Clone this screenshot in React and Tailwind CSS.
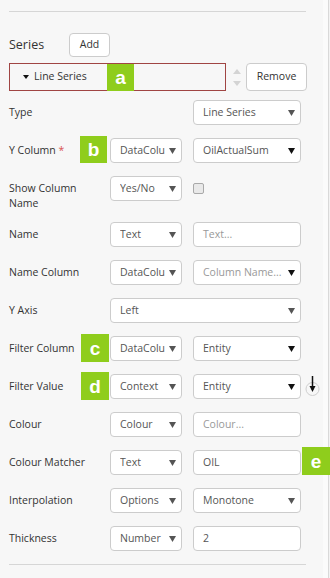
import React from 'react'

const font = { fontFamily: '"Open Sans", "Liberation Sans", sans-serif' }

const Arrow = ({ dark }) => (
  <svg width="7" height="6" viewBox="0 0 7 6" className="shrink-0">
    <polygon points="0,0 7,0 3.5,6" fill={dark ? '#111' : '#555'} />
  </svg>
)

const Select = ({ value, w, placeholder, dark }) => (
  <div className={`${w} shrink-0 h-[25px] bg-white border border-[#cccccc] rounded-[4px] flex items-center pl-[9px] pr-[5px] text-[10.5px]`}>
    <span className={`flex-1 overflow-hidden whitespace-nowrap mr-[4px] ${placeholder ? 'text-[#999]' : 'text-[#555]'}`}>{value}</span>
    <Arrow dark={dark} />
  </div>
)

const Input = ({ value, placeholder }) => (
  <div className="w-[108px] shrink-0 h-[25px] bg-white border border-[#cccccc] rounded-[4px] flex items-center pl-[9px] text-[10.5px]">
    <span className={placeholder ? 'text-[#999]' : 'text-[#555]'}>{value || placeholder}</span>
  </div>
)

const Badge = ({ letter, className = '' }) => (
  <div className={`relative shrink-0 w-[27px] h-[27px] bg-[#8fcd1c] text-white font-bold text-[19px] leading-none flex items-center justify-center ${className}`} style={{ fontFamily: '"Liberation Sans", Arial, sans-serif' }}>
    {letter}
  </div>
)

const Row = ({ label, badge, children, h = 'h-[25px]', required, wrap }) => (
  <div className={`flex ${h} mb-[13px]`}>
    <div className="w-[101px] shrink-0 flex items-start">
      <div className={`text-[10.5px] text-[#333] leading-[15px] pt-[5px] ${wrap ? 'w-[72px]' : 'whitespace-nowrap'}`}>
        {label}
        {required && <span className="text-[#d9534f]"> *</span>}
      </div>
      <div className="flex-1" />
      {badge}
    </div>
    {children}
  </div>
)

export default function App() {
  return (
    <div className="w-[330px] h-[578px] flex overflow-hidden" style={font}>
      <div className="w-[323px] shrink-0 bg-[#f7f7f7] pl-[9px] pt-[11px]">
        <div className="w-[297px] border-t border-[#d6d6d6]" />

        {/* Series header */}
        <div className="flex items-center mt-[21px] h-[24px]">
          <div className="w-[60px] text-[12.5px] text-[#333]">Series</div>
          <div className="w-[41px] h-[24px] bg-white border border-[#cccccc] rounded-[4px] flex items-center justify-center text-[10.5px] text-[#333]">Add</div>
        </div>

        <div className="flex items-center mt-[6px] h-[28px]">
          <div className="w-[217px] h-[28px] border border-[#a04543] flex items-center">
            <div className="w-[23px] flex justify-end pr-[4px]">
              <svg width="6" height="4" viewBox="0 0 6 4"><polygon points="0,0 6,0 3,4" fill="#111" /></svg>
            </div>
            <span className="text-[10.5px] text-[#333] w-[74px] pl-[1px]">Line Series</span>
            <Badge letter="a" className="h-[26px]" />
          </div>
          <div className="w-[19px] flex flex-col items-center justify-center gap-[7px] ml-[1px]">
            <svg width="8" height="5" viewBox="0 0 8 5"><polygon points="0,5 8,5 4,0" fill="#d4d4d4" /></svg>
            <svg width="8" height="5" viewBox="0 0 8 5"><polygon points="0,0 8,0 4,5" fill="#d4d4d4" /></svg>
          </div>
          <div className="w-[61px] h-[28px] bg-white border border-[#cccccc] rounded-[4px] flex items-center justify-center text-[10.5px] text-[#333]">Remove</div>
        </div>

        <div className="mt-[9px]">
          <Row label="Type">
            <div className="w-[83px] shrink-0" />
            <Select value="Line Series" w="w-[108px]" />
          </Row>
          <Row label="Y Column" required badge={<Badge letter="b" className="mt-[-2px] mr-[3px]" />}>
            <Select value="DataColumn" w="w-[72px]" />
            <div className="w-[11px] shrink-0" />
            <Select value="OilActualSum" w="w-[108px]" dark />
          </Row>
          <Row label="Show Column Name" h="h-[33px]" wrap>
            <Select value="Yes/No" w="w-[72px]" />
            <div className="w-[11px] shrink-0" />
            <div className="h-[25px] flex items-center">
              <div className="w-[11px] h-[11px] rounded-[2px] border border-[#a9a9a9] bg-[#e9e9e9]" />
            </div>
          </Row>
          <Row label="Name">
            <Select value="Text" w="w-[72px]" />
            <div className="w-[11px] shrink-0" />
            <Input placeholder="Text..." />
          </Row>
          <Row label="Name Column">
            <Select value="DataColumn" w="w-[72px]" />
            <div className="w-[11px] shrink-0" />
            <Select value="Column Name..." w="w-[108px]" placeholder dark />
          </Row>
          <Row label="Y Axis">
            <Select value="Left" w="w-[191px]" />
          </Row>
          <Row label="Filter Column" badge={<Badge letter="c" className="mt-[-2px] mr-[1px] h-[28px] w-[28px]" />}>
            <Select value="DataColumn" w="w-[72px]" />
            <div className="w-[11px] shrink-0" />
            <Select value="Entity" w="w-[108px]" dark />
          </Row>
          <Row label="Filter Value" badge={<Badge letter="d" className="mt-[-2px] mr-[1px] h-[28px] w-[28px]" />}>
            <Select value="Context" w="w-[72px]" />
            <div className="w-[11px] shrink-0" />
            <Select value="Entity" w="w-[108px]" dark />
            <svg width="16" height="25" viewBox="0 0 16 25" className="ml-[2px] shrink-0 overflow-visible">
              <circle cx="9.5" cy="15" r="6.5" fill="none" stroke="#cfcfcf" strokeWidth="1" />
              <line x1="9.5" y1="2" x2="9.5" y2="16" stroke="#111" strokeWidth="1.5" />
              <polygon points="6.5,12 12.5,12 9.5,18" fill="#111" />
            </svg>
          </Row>
          <Row label="Colour">
            <Select value="Colour" w="w-[72px]" />
            <div className="w-[11px] shrink-0" />
            <Input placeholder="Colour..." />
          </Row>
          <Row label="Colour Matcher">
            <Select value="Text" w="w-[72px]" />
            <div className="w-[11px] shrink-0" />
            <Input value="OIL" />
            <Badge letter="e" className="ml-[1px] mt-[-3px] h-[28px] w-[28px]" />
          </Row>
          <Row label="Interpolation">
            <Select value="Options" w="w-[72px]" />
            <div className="w-[11px] shrink-0" />
            <Select value="Monotone" w="w-[108px]" />
          </Row>
          <Row label="Thickness">
            <Select value="Number" w="w-[72px]" />
            <div className="w-[11px] shrink-0" />
            <Input value="2" />
          </Row>
        </div>
        <div className="w-[297px] border-t border-[#d6d6d6] mt-[12px]" />
      </div>
      <div className="w-[5px] shrink-0 bg-[#fbfbfb]" />
      <div className="w-[1px] shrink-0 bg-[#d9d9d9]" />
      <div className="w-[1px] shrink-0 bg-[#f3f3f3]" />
    </div>
  )
}
